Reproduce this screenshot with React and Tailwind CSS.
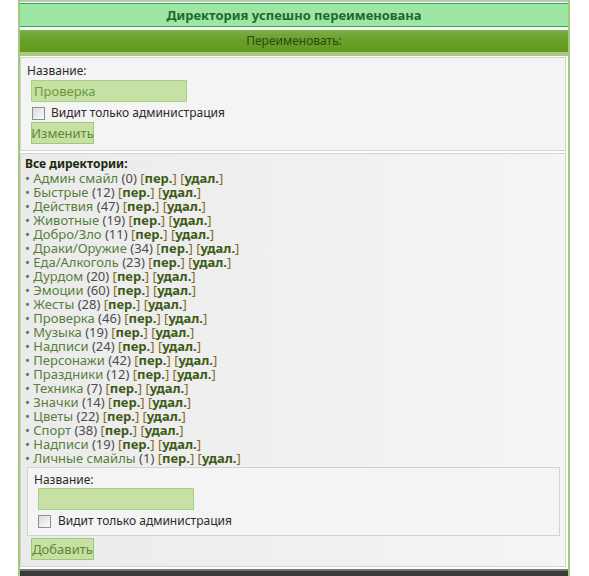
import React from "react";

const items = [
  ["Админ смайл", 0],
  ["Быстрые", 12],
  ["Действия", 47],
  ["Животные", 19],
  ["Добро/Зло", 11],
  ["Драки/Оружие", 34],
  ["Еда/Алкоголь", 23],
  ["Дурдом", 20],
  ["Эмоции", 60],
  ["Жесты", 28],
  ["Проверка", 46],
  ["Музыка", 19],
  ["Надписи", 24],
  ["Персонажи", 42],
  ["Праздники", 12],
  ["Техника", 7],
  ["Значки", 14],
  ["Цветы", 22],
  ["Спорт", 38],
  ["Надписи", 19],
  ["Личные смайлы", 1],
];

function Check() {
  return (
    <span className="inline-block w-[13px] h-[13px] border border-[#8e8f8f] bg-gradient-to-br from-[#dcdcdc] to-[#fbfbfb] shrink-0" />
  );
}

function Input({ value }) {
  return (
    <div className="w-[156px] h-[22px] bg-[#c6e0a5] border border-[#a9d27e] flex items-center px-[2px] text-[13px] text-[#6a9a3a]">
      {value}
    </div>
  );
}

function Button({ children }) {
  return (
    <div className="w-[63px] h-[22px] bg-[#c6e0a5] border border-[#9fc972] flex items-center justify-center text-[#5f8a30] text-[13px]">
      {children}
    </div>
  );
}

export default function App() {
  return (
    <div className="w-[589px] h-[576px] bg-white overflow-hidden font-['Noto_Sans',sans-serif] text-[12px] leading-[14px] text-[#333]">
      <div className="ml-[18px] w-[552px] border-x-2 border-[#a7c97f] h-[576px] flex flex-col">
        <div className="h-[2px] bg-[#c2c2c2]" />
        <div className="mt-[1px] h-[24px] bg-[#9de6a6] border-y border-[#1fb337] flex items-center justify-center font-bold text-[13px] text-[#1c6a2c]">
          Директория успешно переименована
        </div>
        <div className="mt-[3px] h-[22px] bg-gradient-to-b from-[#7cad48] via-[#689f28] to-[#629a1f] flex items-center justify-center text-[12px] text-[#2c4710]">
          Переименовать:
        </div>
        <div className="h-[4px] bg-[#a8c97e]" />
        <div className="mt-[1px] mr-[2px] h-[94px] bg-[#f4f4f4] border border-[#d2d2d2] pl-[6px] pt-[6px]">
          <div className="text-[#2a2a2a]">Название:</div>
          <div className="mt-[2px] ml-[4px]">
            <Input value="Проверка" />
          </div>
          <div className="mt-[4px] ml-[5px] flex items-center gap-[6px] h-[14px]">
            <Check />
            <span className="text-[#2a2a2a]">Видит только администрация</span>
          </div>
          <div className="mt-[2px] ml-[4px]">
            <Button>Изменить</Button>
          </div>
        </div>
        <div className="mt-[2px] mr-[2px] h-[414px] bg-gradient-to-r from-[#ebebeb] to-[#f5f5f5] border border-[#d2d2d2] pl-[4px] pt-[3px]">
          <div className="font-bold text-[#1b2a0c]">Все директории:</div>
          {items.map(([name, n], i) => (
            <div key={i} className="h-[14px] text-[13px] leading-[14px] whitespace-nowrap">
              <span className="text-[#567f3a]">• {name}</span>{" "}
              <span className="text-[#4c4c4c]">({n})</span>{" "}
              <span className="text-[#7d6b25]">[<b className="text-[#3d5b16]">пер.</b>]</span>{" "}
              <span className="text-[#7d6b25]">[<b className="text-[#3d5b16]">удал.</b>]</span>
            </div>
          ))}
          <div className="mt-[2px] ml-[2px] mr-[5px] h-[69px] bg-[#f4f4f4] border border-[#d2d2d2] pl-[6px] pt-[5px]">
            <div className="text-[#2a2a2a]">Название:</div>
            <div className="mt-[1px] ml-[4px]">
              <Input value="" />
            </div>
            <div className="mt-[4px] ml-[4px] flex items-center gap-[7px] h-[14px]">
              <Check />
              <span className="text-[#2a2a2a]">Видит только администрация</span>
            </div>
          </div>
          <div className="mt-[2px] ml-[6px]">
            <Button>Добавить</Button>
          </div>
        </div>
        <div className="mt-[2px] h-[2px] bg-[#777]" />
        <div className="flex-1 bg-[#3b3b3b]" />
      </div>
    </div>
  );
}
